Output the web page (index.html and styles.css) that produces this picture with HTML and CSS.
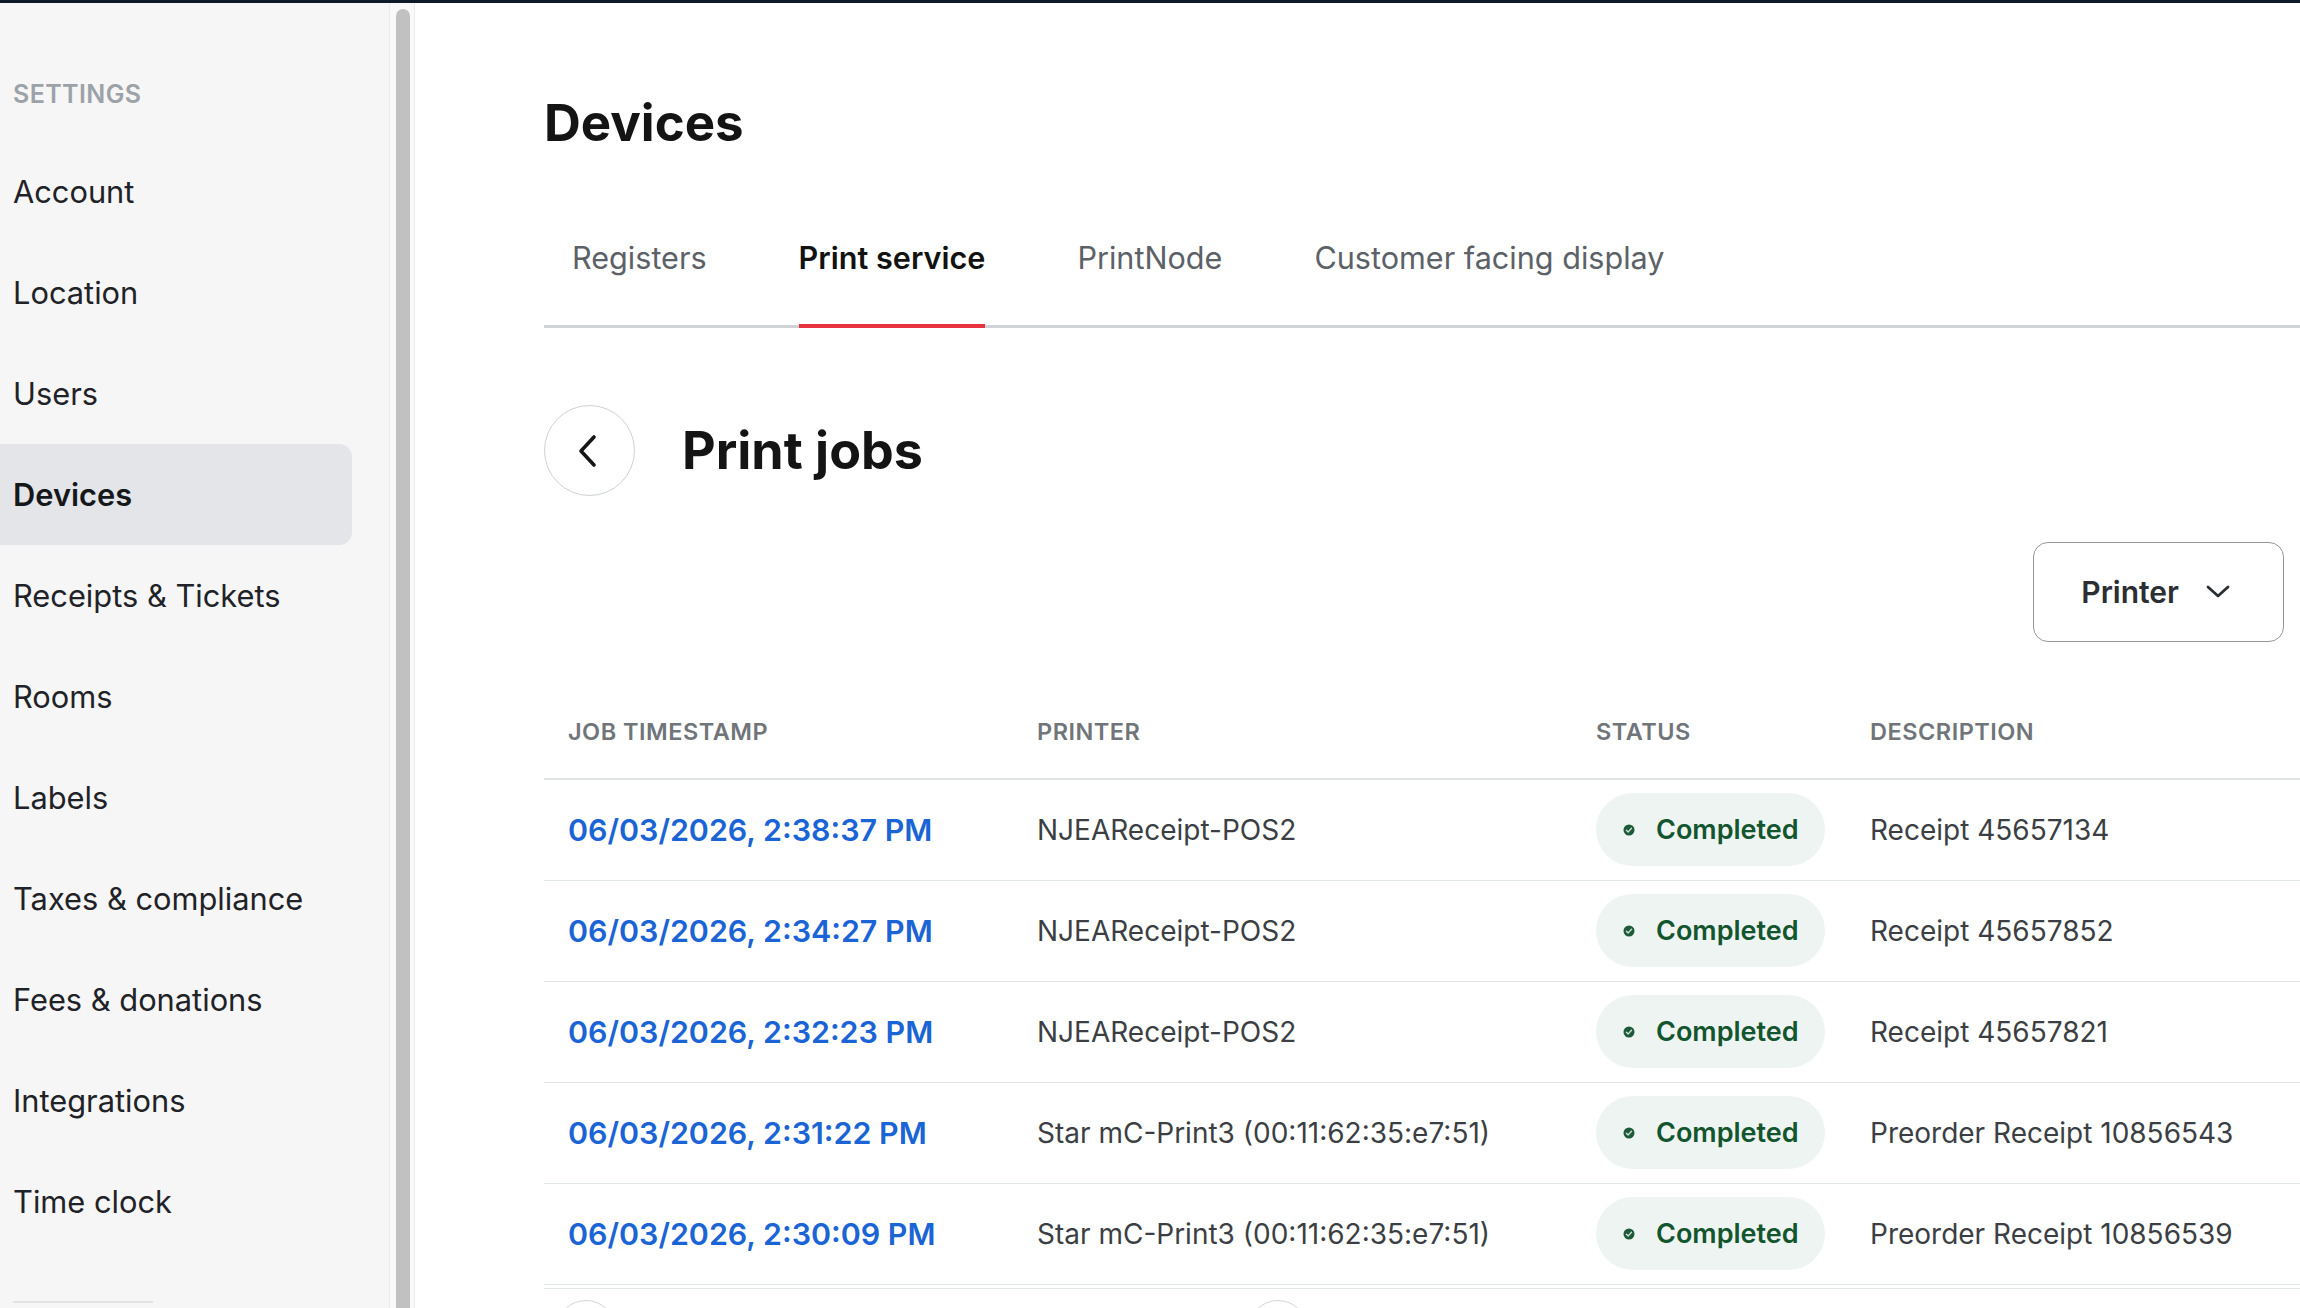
FILE: index.html
```html
<html>
  <head>
    <link rel="stylesheet" href="styles.css">
    <title>Devices - Print jobs</title>
  </head>
  <body>
    <div class="topbar"></div>
    <div class="app">
      <aside class="sidebar">
        <div class="side-label">SETTINGS</div>
        <nav class="side-nav">
          <a class="side-link">Account</a>
          <a class="side-link">Location</a>
          <a class="side-link">Users</a>
          <a class="side-link active">Devices</a>
          <a class="side-link">Receipts &amp; Tickets</a>
          <a class="side-link">Rooms</a>
          <a class="side-link">Labels</a>
          <a class="side-link">Taxes &amp; compliance</a>
          <a class="side-link">Fees &amp; donations</a>
          <a class="side-link">Integrations</a>
          <a class="side-link">Time clock</a>
        </nav>
        <div class="side-rule"></div>
      </aside>
      <div class="scroll-track"><div class="scroll-thumb"></div></div>

      <main class="main">
        <h1 class="page-title">Devices</h1>

        <div class="tabs">
          <a class="tab">Registers</a>
          <a class="tab active">Print service</a>
          <a class="tab">PrintNode</a>
          <a class="tab">Customer facing display</a>
        </div>

        <div class="jobs-head">
          <button class="back-btn">
            <svg width="20" height="34" viewBox="0 0 20 34"><polyline points="16,3 3,17 16,31" fill="none" stroke="#151515" stroke-width="3.6" stroke-linecap="round" stroke-linejoin="round"/></svg>
          </button>
          <h2 class="jobs-title">Print jobs</h2>
        </div>

        <div class="filters">
          <button class="select-btn">
            <span>Printer</span>
            <svg width="24" height="14" viewBox="0 0 24 14"><polyline points="2,2 12,11 22,2" fill="none" stroke="#2b2f33" stroke-width="2.8" stroke-linecap="round" stroke-linejoin="round"/></svg>
          </button>
        </div>

        <table class="jobs">
          <thead>
            <tr>
              <th class="col-time">Job timestamp</th>
              <th class="col-printer">Printer</th>
              <th class="col-status">Status</th>
              <th>Description</th>
            </tr>
          </thead>
          <tbody id="rows"></tbody>
        </table>

        <div class="pager">
          <span class="pager-dot"></span>
          <span class="pager-dot"></span>
        </div>
      </main>
    </div>

    <script>
      const jobs = [
        ['06/03/2026, 2:38:37 PM', 'NJEAReceipt-POS2', 'Receipt 45657134'],
        ['06/03/2026, 2:34:27 PM', 'NJEAReceipt-POS2', 'Receipt 45657852'],
        ['06/03/2026, 2:32:23 PM', 'NJEAReceipt-POS2', 'Receipt 45657821'],
        ['06/03/2026, 2:31:22 PM', 'Star mC-Print3 (00:11:62:35:e7:51)', 'Preorder Receipt 10856543'],
        ['06/03/2026, 2:30:09 PM', 'Star mC-Print3 (00:11:62:35:e7:51)', 'Preorder Receipt 10856539']
      ];

      const tbody = document.querySelector('#rows');
      const dot = '<svg width="12" height="12" viewBox="0 0 12 12"><circle cx="6" cy="6" r="5.5" fill="#1d5a39"/><polyline points="3.4,6.2 5.2,7.9 8.5,4.3" fill="none" stroke="#cfe2d6" stroke-width="1.4" stroke-linecap="round" stroke-linejoin="round"/></svg>';

      for (const job of jobs) {
        const tr = document.createElement('tr');
        tr.innerHTML = `
          <td><a class="job-link">${job[0]}</a></td>
          <td>${job[1]}</td>
          <td><span class="badge">${dot}<span>Completed</span></span></td>
          <td>${job[2]}</td>`;
        tbody.appendChild(tr);
      }
    </script>
  </body>
</html>
```

FILE: styles.css
```css
* {
  box-sizing: border-box;
}

body {
  margin: 0;
  width: 2300px;
  height: 1308px;
  overflow: hidden;
  font-family: Inter, "Open Sans", sans-serif;
  color: #1f2328;
  background: #fff;
}

.topbar {
  height: 3px;
  background: #0f1a28;
}

.app {
  display: flex;
  height: 1305px;
}

/* sidebar */
.sidebar {
  width: 389px;
  flex-shrink: 0;
  background: #f6f6f6;
  padding-top: 76px;
}

.side-label {
  padding-left: 13px;
  font-size: 25px;
  line-height: 30px;
  font-weight: 600;
  letter-spacing: 0.4px;
  color: #9ca2a8;
  margin-bottom: 32px;
}

.side-nav {
  display: flex;
  flex-direction: column;
}

.side-link {
  display: flex;
  align-items: center;
  height: 101px;
  width: 352px;
  padding-left: 13px;
  font-size: 30.8px;
  color: #1f2328;
  border-radius: 0 13px 13px 0;
}

.side-link.active {
  background: #e3e5e8;
  font-weight: 600;
  color: #15181b;
}

.side-rule {
  margin: 49px 0 0 13px;
  width: 140px;
  height: 2px;
  background: #e1e4e7;
}

.scroll-track {
  width: 26px;
  flex-shrink: 0;
  background: #f9f9f9;
  border-left: 1px solid #ebebeb;
  border-right: 1px solid #ebebeb;
  padding: 6px 0 0 6px;
}

.scroll-thumb {
  width: 14px;
  height: 100%;
  background: #c1c1c1;
  border-radius: 7px 7px 0 0;
}

/* main */
.main {
  flex: 1;
  padding: 90px 0 0 129px;
  overflow: hidden;
}

.page-title {
  margin: 0;
  font-size: 51px;
  line-height: 60px;
  font-weight: 700;
  color: #141414;
}

.tabs {
  display: flex;
  align-items: flex-start;
  gap: 92px;
  margin-top: 87px;
  padding-left: 28px;
  border-bottom: 3px solid #cfd2d6;
}

.tab {
  font-size: 30.6px;
  line-height: 36px;
  padding-bottom: 48px;
  color: #5c6167;
  white-space: nowrap;
}

.tab.active {
  color: #121212;
  font-weight: 600;
  border-bottom: 4px solid #e8323f;
  margin-bottom: -3px;
}

.jobs-head {
  display: flex;
  align-items: center;
  gap: 47px;
  margin-top: 77px;
}

.back-btn {
  width: 91px;
  height: 91px;
  border-radius: 50%;
  border: 1.5px solid #cdd1d5;
  background: #fff;
  display: flex;
  align-items: center;
  justify-content: center;
  padding: 0 4px 0 0;
}

.jobs-title {
  margin: 0;
  font-size: 52px;
  font-weight: 700;
  color: #141414;
}

.filters {
  display: flex;
  justify-content: flex-end;
  margin-top: 46px;
  padding-right: 16px;
}

.select-btn {
  display: flex;
  align-items: center;
  gap: 27px;
  height: 100px;
  padding: 0 53px 0 47px;
  border: 1.5px solid #91969c;
  border-radius: 15px;
  background: #fff;
  font-family: Inter, sans-serif;
  font-size: 30px;
  font-weight: 600;
  color: #2b2f33;
}

/* table */
.jobs {
  width: 100%;
  margin-top: 37px;
  border-collapse: collapse;
  table-layout: fixed;
}

.jobs th {
  height: 100px;
  padding: 6px 24px 0;
  text-align: left;
  font-size: 23.5px;
  font-weight: 600;
  letter-spacing: 0.5px;
  text-transform: uppercase;
  color: #70757a;
  border-bottom: 2px solid #e1e4e7;
}

.col-time {
  width: 469px;
}

.col-printer {
  width: 559px;
}

.col-status {
  width: 274px;
}

.jobs td {
  height: 101px;
  padding: 0 24px;
  font-size: 28px;
  color: #3b3f44;
  white-space: nowrap;
  border-bottom: 1.5px solid #e3e6e9;
}

.job-link {
  font-size: 30.4px;
  font-weight: 600;
  color: #1a64d6;
}

.badge {
  display: inline-flex;
  align-items: center;
  gap: 21px;
  height: 73px;
  padding: 0 26px 0 27px;
  border-radius: 37px;
  background: #eef4f1;
  font-size: 27px;
  font-weight: 600;
  color: #12552f;
}

.pager {
  display: flex;
  gap: 632px;
  margin-top: 3px;
  padding: 11px 0 0 12px;
  border-top: 1.5px solid #e3e6e9;
}

.pager-dot {
  width: 60px;
  height: 60px;
  border-radius: 50%;
  border: 1.5px solid #d3d6da;
}
```
